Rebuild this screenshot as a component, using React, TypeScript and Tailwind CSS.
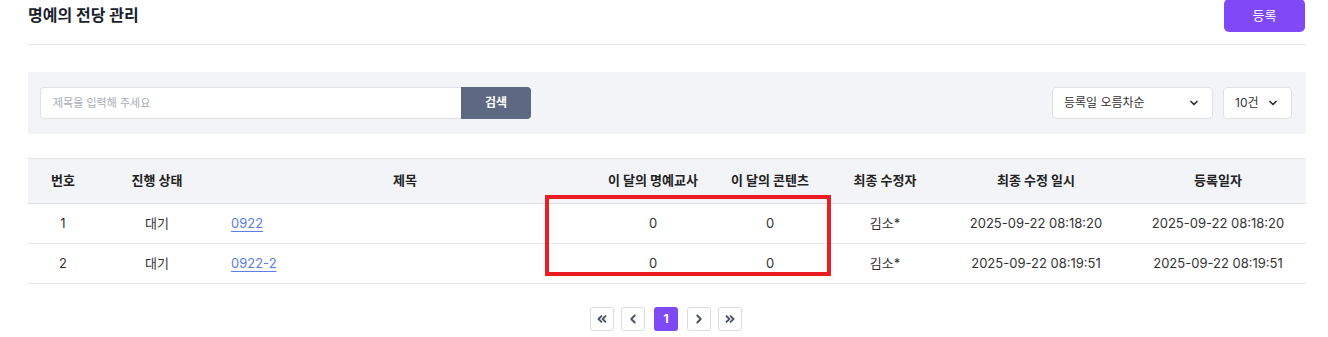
import { ChevronDown, ChevronLeft, ChevronRight, ChevronsLeft, ChevronsRight } from "lucide-react";

type Row = {
  no: number;
  status: string;
  title: string;
  teachers: number;
  contents: number;
  editor: string;
  updatedAt: string;
  createdAt: string;
};

const rows: Row[] = [
  { no: 1, status: "대기", title: "0922", teachers: 0, contents: 0, editor: "김소*", updatedAt: "2025-09-22 08:18:20", createdAt: "2025-09-22 08:18:20" },
  { no: 2, status: "대기", title: "0922-2", teachers: 0, contents: 0, editor: "김소*", updatedAt: "2025-09-22 08:19:51", createdAt: "2025-09-22 08:19:51" },
];

const cols = "grid-cols-[70px_118px_378px_118px_116px_114px_188px_176px]";

export default function App() {
  return (
    <div
      className="h-[337px] w-[1328px] overflow-hidden bg-white text-[#222]"
      style={{ fontFamily: 'Inter, "Noto Sans CJK KR", sans-serif' }}
    >
      <div className="mx-[28px] w-[1278px]">
        <div className="flex h-[45px] items-start justify-between border-b border-[#e8e8ec]">
          <h1 className="mt-[4px] text-[16px] font-bold leading-[22px] text-[#1a1f2e]">명예의 전당 관리</h1>
          <button className="-mt-[1px] mr-[1px] h-[33px] w-[81px] rounded-[5px] bg-[#8049f8] text-[13px] text-white">
            등록
          </button>
        </div>

        <div className="mt-[27px] flex h-[62px] items-center justify-between bg-[#f3f4f8] pl-[12px] pr-[14px]">
          <div className="flex h-[32px]">
            <div className="flex w-[421px] items-center rounded-l-[4px] border border-r-0 border-[#dfe1e6] bg-white pl-[12px] text-[11px] text-[#a9adb6]">
              제목을 입력해 주세요
            </div>
            <button className="w-[70px] rounded-r-[4px] bg-[#5d6882] text-[12px] font-bold text-white">검색</button>
          </div>
          <div className="flex gap-[10px]">
            <div className="flex h-[32px] w-[161px] items-center justify-between rounded-[4px] border border-[#dfe1e6] bg-white pl-[11px] pr-[12px] text-[12px] text-[#333]">
              <span>등록일 오름차순</span>
              <ChevronDown className="h-[12px] w-[12px]" strokeWidth={3.5} />
            </div>
            <div className="flex h-[32px] w-[69px] items-center justify-between rounded-[4px] border border-[#dfe1e6] bg-white pl-[11px] pr-[12px] text-[12px] text-[#333]">
              <span>10건</span>
              <ChevronDown className="h-[12px] w-[12px]" strokeWidth={3.5} />
            </div>
          </div>
        </div>

        <div className="relative mt-[24px] border-t border-[#e4e5ea] text-[13px]">
          <div className={`grid ${cols} h-[45px] items-center border-b border-[#dcdde3] bg-[#f3f4f8] text-center font-bold text-[#222]`}>
            <span>번호</span>
            <span>진행 상태</span>
            <span>제목</span>
            <span>이 달의 명예교사</span>
            <span>이 달의 콘텐츠</span>
            <span>최종 수정자</span>
            <span>최종 수정 일시</span>
            <span>등록일자</span>
          </div>
          {rows.map((r) => (
            <div key={r.no} className={`grid ${cols} h-[40px] items-center border-b border-[#e8e8ec] text-center text-[#333]`}>
              <span>{r.no}</span>
              <span>{r.status}</span>
              <span className="pl-[15px] text-left">
                <a className="text-[#5b7ee5] underline underline-offset-[3px]">{r.title}</a>
              </span>
              <span>{r.teachers}</span>
              <span>{r.contents}</span>
              <span>{r.editor}</span>
              <span>{r.updatedAt}</span>
              <span>{r.createdAt}</span>
            </div>
          ))}
          <div className="absolute left-[517px] top-[36px] h-[81px] w-[286px] border-[4px] border-[#ec1c24]" />
        </div>

        <div className="mt-[23px] flex justify-center gap-[7px] pr-[2px]">
          <PageBtn><ChevronsLeft className="h-[14px] w-[14px]" strokeWidth={3.2} /></PageBtn>
          <PageBtn><ChevronLeft className="h-[14px] w-[14px]" strokeWidth={3.2} /></PageBtn>
          <button className="mx-[2px] flex h-[24px] w-[24px] items-center justify-center rounded-[3px] bg-[#8049f8] text-[12px] font-bold text-white">
            1
          </button>
          <PageBtn><ChevronRight className="h-[14px] w-[14px]" strokeWidth={3.2} /></PageBtn>
          <PageBtn><ChevronsRight className="h-[14px] w-[14px]" strokeWidth={3.2} /></PageBtn>
        </div>
      </div>
    </div>
  );
}

function PageBtn({ children }: { children: React.ReactNode }) {
  return (
    <button className="flex h-[24px] w-[24px] items-center justify-center rounded-[3px] border border-[#dcdde2] bg-white text-[#4a5166]">
      {children}
    </button>
  );
}
